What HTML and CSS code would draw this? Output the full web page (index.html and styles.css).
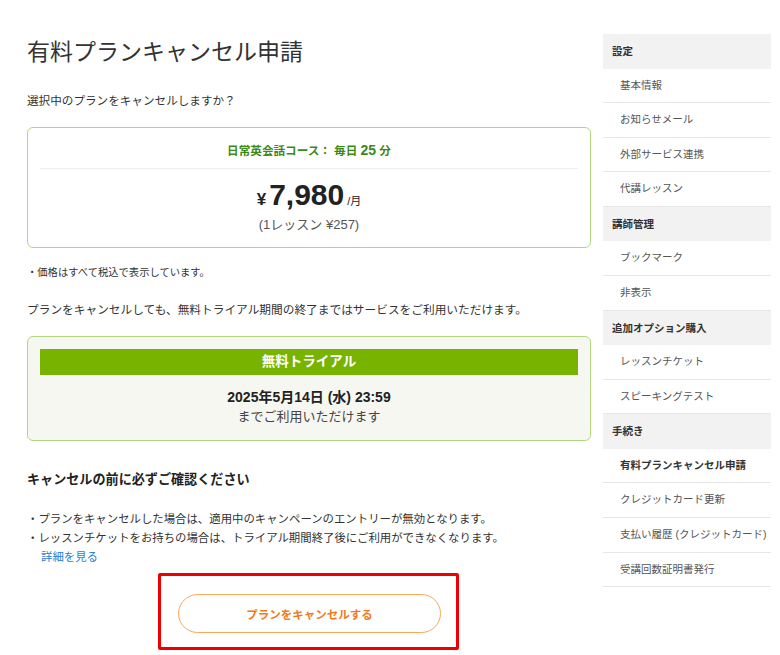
FILE: index.html
```html
<!DOCTYPE html>
<html lang="ja">
<head>
    <meta charset="UTF-8">
    <meta name="viewport" content="width=device-width, initial-scale=1.0">
    <title>有料プランキャンセル申請</title>
    <link rel="stylesheet" href="styles.css">
</head>
<body>
    <div class="page">
        <main class="main">
            <h1>有料プランキャンセル申請</h1>
            <p class="lead">選択中のプランをキャンセルしますか？</p>

            <div class="plan-box">
                <div class="plan-name">日常英会話コース： 毎日 <span class="num">25</span> 分</div>
                <div class="plan-price">
                    <span class="yen">¥</span><span class="amount">7,980</span><span class="per">/月</span>
                </div>
                <div class="plan-unit">(1レッスン ¥257)</div>
            </div>

            <p class="note">・価格はすべて税込で表示しています。</p>
            <p class="info">プランをキャンセルしても、無料トライアル期間の終了まではサービスをご利用いただけます。</p>

            <div class="trial-box">
                <div class="trial-bar">無料トライアル</div>
                <div class="trial-date">2025年5月14日 (水) 23:59</div>
                <div class="trial-text">までご利用いただけます</div>
            </div>

            <h2>キャンセルの前に必ずご確認ください</h2>
            <ul class="checks">
                <li>・プランをキャンセルした場合は、適用中のキャンペーンのエントリーが無効となります。</li>
                <li>・レッスンチケットをお持ちの場合は、トライアル期間終了後にご利用ができなくなります。<br><a href="#" class="more">詳細を見る</a></li>
            </ul>

            <div class="cancel-area">
                <div class="highlight">
                    <button class="cancel-btn">プランをキャンセルする</button>
                </div>
            </div>
        </main>

        <aside class="side">
            <div class="side-head">設定</div>
            <a class="side-item" href="#">基本情報</a>
            <a class="side-item" href="#">お知らせメール</a>
            <a class="side-item" href="#">外部サービス連携</a>
            <a class="side-item" href="#">代講レッスン</a>
            <div class="side-head">講師管理</div>
            <a class="side-item" href="#">ブックマーク</a>
            <a class="side-item" href="#">非表示</a>
            <div class="side-head">追加オプション購入</div>
            <a class="side-item" href="#">レッスンチケット</a>
            <a class="side-item" href="#">スピーキングテスト</a>
            <div class="side-head">手続き</div>
            <a class="side-item active" href="#">有料プランキャンセル申請</a>
            <a class="side-item" href="#">クレジットカード更新</a>
            <a class="side-item" href="#">支払い履歴 (クレジットカード)</a>
            <a class="side-item" href="#">受講回数証明書発行</a>
        </aside>
    </div>
</body>
</html>
```

FILE: styles.css
```css
body {
    margin: 0;
    background: #fff;
    color: #333;
    font-family: "Liberation Sans", "Noto Sans CJK JP", sans-serif;
}
.page {
    display: flex;
    gap: 12px;
    padding-left: 27px;
}
.main {
    width: 564px;
    padding-top: 35px;
}
h1 {
    margin: 0;
    font-size: 23px;
    line-height: 34px;
    font-weight: normal;
    color: #333;
}
.lead {
    margin: 23px 0 0;
    font-size: 11.6px;
    line-height: 18px;
}
.plan-box {
    margin-top: 17px;
    border: 1.5px solid #b3d77f;
    border-radius: 6px;
    padding: 13px 12px 12px;
    text-align: center;
}
.plan-name {
    color: #3c8a1a;
    font-size: 11.6px;
    font-weight: bold;
    line-height: 18px;
    padding-bottom: 8px;
    border-bottom: 1px solid #eee;
}
.plan-name .num {
    font-size: 14px;
}
.plan-price {
    margin-top: 9px;
    height: 34px;
    line-height: 34px;
    color: #222;
    font-weight: bold;
}
.yen {
    font-size: 17px;
    margin-right: 3px;
}
.amount {
    font-size: 30px;
}
.per {
    font-size: 11px;
    margin-left: 3px;
    font-weight: normal;
}
.plan-unit {
    font-size: 13px;
    color: #555;
    line-height: 20px;
    margin-top: 3px;
}
.note {
    margin: 17px 0 0;
    font-size: 10.3px;
    line-height: 16px;
}
.info {
    margin: 20px 0 0;
    font-size: 11.7px;
    line-height: 18px;
}
.trial-box {
    margin-top: 17px;
    background: #f7f7f1;
    border: 1.5px solid #b3d77f;
    border-radius: 6px;
    padding: 12px 12px 13px;
    text-align: center;
}
.trial-bar {
    background: #78b300;
    color: #fff;
    font-weight: bold;
    font-size: 13.5px;
    line-height: 26px;
}
.trial-date {
    margin-top: 12px;
    font-weight: bold;
    font-size: 14px;
    line-height: 20px;
    color: #222;
}
.trial-text {
    font-size: 13px;
    line-height: 20px;
    color: #444;
}
h2 {
    margin: 29px 0 0;
    font-size: 13.1px;
    line-height: 20px;
    color: #222;
}
.checks {
    list-style: none;
    margin: 20px 0 0;
    padding: 0;
    font-size: 11.4px;
    line-height: 19px;
}
.more {
    color: #2b7fd4;
    text-decoration: none;
    margin-left: 14px;
}
.cancel-area {
    display: flex;
    padding-left: 131px;
    margin-top: 6px;
}
.highlight {
    border: 3px solid #ee0000;
    border-radius: 2px;
    padding: 18px 15px 14px 17px;
}
.cancel-btn {
    width: 263px;
    height: 39px;
    background: #fff;
    border: 1px solid #f7a95a;
    border-radius: 20px;
    color: #f07a1a;
    font-family: inherit;
    font-weight: bold;
    font-size: 11.5px;
    cursor: pointer;
}
.side {
    width: 168px;
    margin-top: 34px;
    display: flex;
    flex-direction: column;
    font-size: 10.5px;
}
.side-head {
    background: #f2f2f2;
    height: 34.5px;
    line-height: 34.5px;
    padding-left: 9px;
    font-weight: bold;
    color: #333;
}
.side-item {
    height: 33.6px;
    line-height: 33.6px;
    padding-left: 17px;
    color: #555;
    text-decoration: none;
    border-bottom: 0.7px solid #e6e6e6;
}
.side-item.active {
    color: #333;
    font-weight: bold;
}
```
